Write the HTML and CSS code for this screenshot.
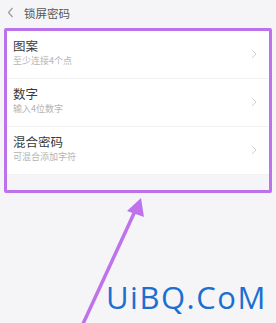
FILE: index.html
```html
<!DOCTYPE html>
<html lang="zh">
<head>
<meta charset="utf-8">
<link rel="stylesheet" href="styles.css">
</head>
<body>
<div class="header">
  <svg class="back" width="7" height="11" viewBox="0 0 7 11"><path d="M5.5 1 L1.5 5.5 L5.5 10" fill="none" stroke="#9a9a9a" stroke-width="1.2"/></svg>
  <span class="title">锁屏密码</span>
</div>
<div class="frame">
  <div class="row">
    <div class="texts"><div class="t">图案</div><div class="s">至少连接4个点</div></div>
    <svg class="chev" width="6" height="10" viewBox="0 0 6 10"><path d="M1 1 L5 5 L1 9" fill="none" stroke="#cfcfcf" stroke-width="1"/></svg>
  </div>
  <div class="row">
    <div class="texts"><div class="t">数字</div><div class="s">输入4位数字</div></div>
    <svg class="chev" width="6" height="10" viewBox="0 0 6 10"><path d="M1 1 L5 5 L1 9" fill="none" stroke="#cfcfcf" stroke-width="1"/></svg>
  </div>
  <div class="row">
    <div class="texts"><div class="t">混合密码</div><div class="s">可混合添加字符</div></div>
    <svg class="chev" width="6" height="10" viewBox="0 0 6 10"><path d="M1 1 L5 5 L1 9" fill="none" stroke="#cfcfcf" stroke-width="1"/></svg>
  </div>
  <div class="spacer"></div>
</div>
<svg class="arrow" width="276" height="323" viewBox="0 0 276 323">
  <line x1="82" y1="326" x2="136" y2="209" stroke="#be72ec" stroke-width="3.5" stroke-linecap="round"/>
  <polygon points="141,198 127,211 144,217" fill="#be72ec"/>
</svg>
<div class="mark">UiBQ.CoM</div>
</body>
</html>
```
FILE: styles.css
```css
html, body {
  margin: 0;
  padding: 0;
}
body {
  width: 276px;
  height: 323px;
  background: #f5f5f7;
  font-family: "Noto Sans CJK SC", "Noto Sans", sans-serif;
  position: relative;
  overflow: hidden;
}
.header {
  height: 28px;
  display: flex;
  align-items: center;
  padding-left: 7px;
  gap: 10px;
  box-sizing: border-box;
  padding-bottom: 3px;
}
.title {
  font-size: 11.5px;
  color: #555;
  line-height: 14px;
}
.frame {
  margin: 0 4px;
  border: 3px solid #bb72ea;
  border-radius: 2px;
  background: #f5f5f7;
}
.row {
  height: 48px;
  background: #fff;
  display: flex;
  align-items: flex-start;
  justify-content: space-between;
  padding: 7px 12px 0 6px;
  box-sizing: border-box;
  border-bottom: 1px solid #f2f2f2;
}
.row:last-of-type {
  border-bottom: none;
}
.t {
  font-size: 12.5px;
  line-height: 16px;
  color: #3a3a3a;
}
.s {
  font-size: 9px;
  line-height: 12px;
  color: #b4b4b4;
  margin-top: 1px;
}
.chev {
  margin-top: 11px;
}
.spacer {
  height: 15px;
}
.arrow {
  position: absolute;
  left: 0;
  top: 0;
}
.mark {
  position: absolute;
  left: 106px;
  top: 279px;
  font-family: "Open Sans", sans-serif;
  font-size: 31px;
  line-height: 36px;
  color: #1c6fd1;
  letter-spacing: 1.5px;
}
```
